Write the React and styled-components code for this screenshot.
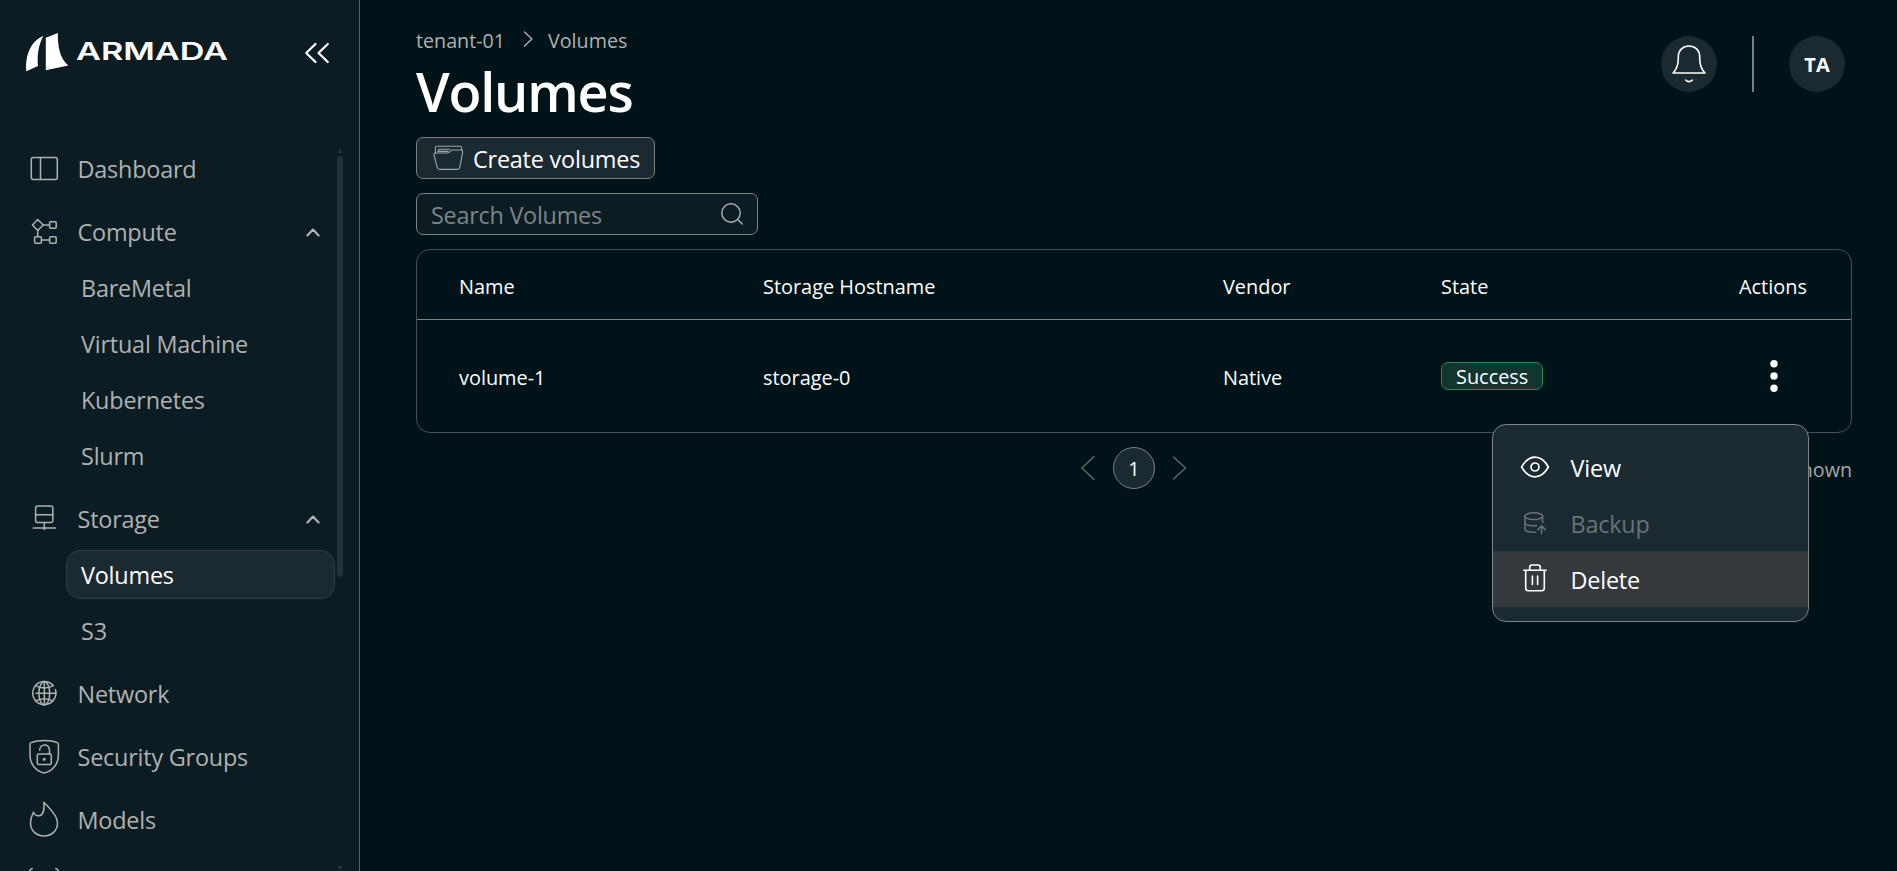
import React from 'react'
import styled, { createGlobalStyle } from 'styled-components'

const GlobalStyle = createGlobalStyle`
    * {
        box-sizing: border-box;
    }
    body {
        margin: 0;
        overflow: hidden;
        background-color: #001318;
        color: #ffffff;
        font-family: "Open Sans", "Noto Sans", sans-serif;
    }
    button, input {
        font-family: inherit;
        color: inherit;
    }
    svg {
        display: block;
        overflow: visible;
        flex-shrink: 0;
    }
`

const Page = styled.div`
    display: flex;
    height: 100vh;
    overflow: hidden;
`

/* ---------- sidebar ---------- */

const Sidebar = styled.aside`
    display: flex;
    flex-direction: column;
    flex-shrink: 0;
    width: 360px;
    background-color: #0b1c22;
    border-right: 1px solid #546063;
`
const SidebarTop = styled.div`
    display: flex;
    align-items: flex-start;
    justify-content: space-between;
    flex-shrink: 0;
    height: 144px;
    padding: 33px 30px 0 26px;
`
const CollapseButton = styled.button`
    display: flex;
    margin-top: 10px;
    padding: 0;
    border: none;
    background: none;
`
const SidebarBody = styled.div`
    display: flex;
    flex: 1;
    min-height: 0;
`
const Nav = styled.nav`
    display: flex;
    flex-direction: column;
    gap: 14px;
    width: 337px;
    overflow: hidden;
    color: #b0b1b1;
`
const NavGroup = styled.div`
    display: flex;
    flex-direction: column;
    flex-shrink: 0;
    gap: 7px;
`
const NavItem = styled.div`
    display: flex;
    align-items: center;
    gap: 18.5px;
    height: 49px;
    padding: 0 17px 0 29px;
    font-size: 23.4px;
    letter-spacing: -0.2px;
`
const NavLabel = styled.span`
    flex: 1;
    white-space: nowrap;
`
const SubItem = styled.div`
    display: flex;
    align-items: center;
    height: 49px;
    margin: 0 2px 0 66px;
    padding-left: 14px;
    font-size: 23.4px;
    letter-spacing: -0.2px;
    border: 1px solid ${props => props.$active ? '#313d42' : 'transparent'};
    border-radius: 14px;
    background-color: ${props => props.$active ? '#1b2a31' : 'transparent'};
    color: ${props => props.$active ? '#ffffff' : 'inherit'};
`
const ScrollTrack = styled.div`
    display: flex;
    flex-direction: column;
    align-items: center;
    justify-content: space-between;
    width: 6px;
    padding-top: 4px;
`
const ScrollThumb = styled.div`
    width: 6px;
    height: 421px;
    margin: 3px 0 auto;
    border-radius: 3px;
    background-color: #233239;
`
const ScrollArrow = styled.div`
    width: 0;
    height: 0;
    border: 3px solid transparent;
    border-top: ${props => props.$down ? '5px solid #233239' : 'none'};
    border-bottom: ${props => props.$down ? 'none' : '5px solid #233239'};
`

/* ---------- main ---------- */

const Main = styled.main`
    display: flex;
    flex-direction: column;
    flex: 1;
    padding: 24px 45px 0 56px;
`
const Header = styled.header`
    display: flex;
    justify-content: space-between;
    align-items: flex-start;
    height: 113px;
`
const Breadcrumb = styled.div`
    display: flex;
    align-items: center;
    height: 32px;
    font-size: 19.7px;
    color: #b0b1b1;
`
const CrumbArrow = styled.span`
    padding: 0 16px 0 18px;
`
const Title = styled.h1`
    margin: 0;
    font-size: 54px;
    line-height: 70px;
    font-weight: 600;
    letter-spacing: -1.2px;
`
const HeaderRight = styled.div`
    display: flex;
    align-items: center;
    gap: 35px;
    padding: 12px 7px 0 0;
`
const Circle = styled.div`
    display: flex;
    align-items: center;
    justify-content: center;
    width: 56px;
    height: 56px;
    border-radius: 50%;
    background-color: #1b2a31;
    font-size: 20px;
    font-weight: 700;
`
const Divider = styled.div`
    width: 2px;
    height: 56px;
    background-color: #808080;
`
const CreateButton = styled.button`
    display: flex;
    align-items: center;
    gap: 10px;
    width: 239px;
    height: 42px;
    padding: 0 0 0 16px;
    border: 1px solid #808080;
    border-radius: 7px;
    background-color: #1b2a31;
    font-size: 23.4px;
    letter-spacing: -0.2px;
    white-space: nowrap;
`
const ButtonLabel = styled.span`
    padding-top: 2px;
`
const SearchBox = styled.div`
    display: flex;
    align-items: center;
    width: 342px;
    height: 42px;
    margin: 14px 0;
    padding: 0 14px;
    border: 1px solid #808080;
    border-radius: 7px;
    background-color: #0b1c22;
`
const SearchInput = styled.input`
    flex: 1;
    min-width: 0;
    padding: 2px 0 0;
    border: none;
    outline: none;
    background: none;
    font-size: 23.4px;
    letter-spacing: -0.25px;
    &::placeholder {
        color: #7d8587;
        opacity: 1;
    }
`
const Table = styled.div`
    border: 1px solid #465255;
    border-radius: 14px;
`
const Row = styled.div`
    display: grid;
    grid-template-columns: 304px 460px 218px 298px 1fr;
    align-items: center;
    height: ${props => props.$head ? '70px' : '112px'};
    padding-left: 42px;
    font-size: 19.9px;
    border-bottom: ${props => props.$head ? '1px solid #7f8586' : 'none'};
`
const Cell = styled.div`
    display: flex;
    align-items: center;
    white-space: nowrap;
`
const TextCell = styled(Cell)`
    padding-top: 3px;
`
const Badge = styled.span`
    display: flex;
    align-items: center;
    height: 28px;
    padding: 0 14px;
    border: 1px solid #2c8a55;
    border-radius: 7px;
    background-color: #12352f;
`
const MenuAnchor = styled.div`
    position: relative;
    display: flex;
    justify-content: center;
    width: 70px;
`
const Menu = styled.div`
    position: absolute;
    top: 65px;
    right: 0;
    z-index: 2;
    width: 317px;
    padding: 14px 0;
    border: 1px solid #808586;
    border-radius: 14px;
    background-color: #1b2a31;
`
const MenuItem = styled.div`
    display: flex;
    align-items: center;
    gap: 20.5px;
    height: 56px;
    padding: 2px 0 0 27px;
    font-size: 23.4px;
    letter-spacing: -0.2px;
    color: ${props => props.$disabled ? '#697277' : '#ffffff'};
    background-color: ${props => props.$hovered ? '#33393d' : 'transparent'};
`
const Footer = styled.div`
    display: grid;
    grid-template-columns: 1fr auto 1fr;
    align-items: center;
    height: 42px;
    margin-top: 14px;
`
const Pager = styled.div`
    grid-column: 2;
    display: flex;
    align-items: center;
    gap: 18px;
    color: #5c6466;
`
const PageNumber = styled.span`
    display: flex;
    align-items: center;
    justify-content: center;
    width: 42px;
    height: 42px;
    border: 1px solid #808080;
    border-radius: 50%;
    background-color: #1b2a31;
    color: #ffffff;
    font-size: 20px;
`
const Shown = styled.span`
    justify-self: end;
    padding-top: 3px;
    font-size: 19.7px;
    color: #a3a7a8;
`

/* ---------- icons ---------- */

function Icon({ w, h, sw = 1.4, children }) {
    return (
        <svg width={w} height={h} viewBox={`0 0 ${w} ${h}`} fill="none" stroke="currentColor"
            strokeWidth={sw} strokeLinecap="round" strokeLinejoin="round">
            {children}
        </svg>
    )
}

const NavIcon = ({ children }) => <Icon w={30} h={36} sw={1.5}>{children}</Icon>

const Logo = () => (
    <svg width="204" height="40" viewBox="0 0 204 40" fill="#ffffff">
        <path d="M0.3 38.2 C-1 22 5 8 17.3 3 C12.5 12 11 22 12 33 Z" />
        <path d="M19.8 4.8 L31.8 0 C31.8 15 34 25 42.3 32.6 L19.8 37.2 Z" />
        <text x="50" y="27" fontFamily="Inter, sans-serif" fontWeight="600" fontSize="24.5"
            textLength="152" lengthAdjust="spacingAndGlyphs">ARMADA</text>
    </svg>
)

const DashboardIcon = () => (
    <NavIcon>
        <rect x="2.3" y="6.5" width="26" height="22" rx="2" />
        <path d="M11.5 6.5 V28.5" />
    </NavIcon>
)
const ComputeIcon = () => (
    <NavIcon>
        <path d="M8.7 5.5 L14.2 11 L8.7 16.5 L3.5 11 Z" />
        <rect x="20.6" y="7.7" width="6.6" height="6.6" rx="1" />
        <rect x="5.6" y="22.7" width="6.8" height="6.6" rx="1" />
        <rect x="20.6" y="22.7" width="6.6" height="6.6" rx="1" />
        <path d="M14.2 11 H20.6 M8.7 16.5 V22.7 M12.4 26 H20.6" />
    </NavIcon>
)
const StorageIcon = () => (
    <NavIcon>
        <rect x="6.6" y="5" width="17.2" height="16.6" rx="2" />
        <path d="M6.6 13.7 H23.8 M15.3 21.6 V28.5 M4.2 26.9 H26.4" />
    </NavIcon>
)
const NetworkIcon = () => (
    <NavIcon>
        <path d="M24.2 9.6 A11.6 11.6 0 1 0 26.4 13.6" />
        <path d="M15.3 5.7 V28.9 M7 17.3 H27" />
        <ellipse cx="15.3" cy="17.3" rx="5.4" ry="11.6" />
        <path d="M6.8 9.6 C11 12.7 19.5 12.7 24.2 9.6 M6.8 25.1 C11 21.9 19.5 21.9 23.8 25.1" />
    </NavIcon>
)
const SecurityIcon = () => (
    <NavIcon>
        <path d="M15.2 1.5 C10.5 1.5 5.5 2.2 2 3.6 Q1 4 1 5.2 V16.5 C1 25.5 7.5 32.2 15.2 34 C22.9 32.2 29.4 25.5 29.4 16.5 V5.2 Q29.4 4 28.4 3.6 C25 2.2 20 1.5 15.2 1.5 Z" />
        <rect x="8.3" y="15" width="14" height="10.6" rx="1.5" />
        <path d="M10.7 11.2 C10.7 4.2 20.5 4.2 20.5 11 V15" />
        <circle cx="15.2" cy="20.2" r="0.8" fill="currentColor" />
    </NavIcon>
)
const ModelsIcon = () => (
    <NavIcon>
        <path d="M14.9 0.2 C18.5 4.8 28.5 12 28.5 21 C28.5 28.7 22.5 34 15 34 C7.5 34 1.5 28.7 1.5 21 C1.5 16.5 2.8 13.5 4.5 10.2 C5.5 12.5 7.5 14.2 10.2 13.8 C14.5 13 15.5 7 14.9 0.2 Z" />
    </NavIcon>
)
const TrainingIcon = () => (
    <NavIcon>
        <path d="M0.5 6.2 C1 4.8 1.8 3.9 3.2 3.5 M26.8 3.5 C28.2 3.9 29 4.8 29.5 6.2" />
    </NavIcon>
)
const CaretUp = () => (
    <Icon w={14} h={8} sw={2.2}><path d="M1.4 7.4 L7 1.6 L12.6 7.4" /></Icon>
)
const CollapseIcon = () => (
    <Icon w={24} h={20} sw={2.2}><path d="M10.5 1 L1.2 10 L10.5 19 M22.8 1 L13.5 10 L22.8 19" /></Icon>
)
const FolderIcon = () => (
    <Icon w={30} h={26} sw={1.1}>
        <g stroke="#a0a6a8">
            <path d="M1 10 Q0.6 8 2.6 8 H14.6 Q16 8 16.8 6.8 L17.4 5.8 Q18 5 19.2 5 H28 Q30 5 29.6 7.6 L26.8 22.4 Q26.4 24.4 24.4 24.4 H6.6 Q4.6 24.4 4.2 22.4 Z" />
            <path d="M2.4 8 V2.6 Q2.4 1.2 3.8 1.2 H27.2 Q28.6 1.2 28.6 2.6 V5" />
            <path d="M5.2 6.4 V5.2 Q5.2 4.2 6.4 4.2 H16.6 M5.2 6.4 H15" />
        </g>
    </Icon>
)
const SearchIcon = () => (
    <Icon w={22} h={22}>
        <g stroke="#b0b1b1">
            <circle cx="10" cy="10" r="9.2" />
            <path d="M16.6 16.6 L21.2 21" />
        </g>
    </Icon>
)
const BellIcon = () => (
    <Icon w={34} h={38} sw={1.6}>
        <path d="M1 28 C5 24 6.3 20 6.3 13.5 V11.5 C6.3 5 11 1 17 1 C23 1 27.7 5 27.7 11.5 V13.5 C27.7 20 29 24 33 28 Z" />
        <path d="M13.6 35 Q17 38.2 20.4 35" />
    </Icon>
)
const EyeIcon = () => (
    <Icon w={30} h={24} sw={1.7}>
        <path d="M1.6 11 C5 5 9.5 1.2 15 1.2 C20.5 1.2 25 5 28.4 11 C25 17 20.5 20.8 15 20.8 C9.5 20.8 5 17 1.6 11 Z" />
        <circle cx="15" cy="11" r="4" />
    </Icon>
)
const BackupIcon = () => (
    <Icon w={30} h={24} sw={1.5}>
        <ellipse cx="13.8" cy="4.2" rx="8.8" ry="3.4" />
        <path d="M5 4.2 V17 C5 19.2 9 20.4 15.4 20.2 M22.6 4.2 V10.4 M5 10.6 C5 13.2 9.5 14.2 16.6 13.6" />
        <path d="M21.5 21.8 V14.2 M17.8 17.6 L21.5 13.9 L25.2 17.6" />
    </Icon>
)
const TrashIcon = () => (
    <Icon w={30} h={32} sw={1.6}>
        <path d="M3.8 6.2 H26.2 M5.7 6.2 V24 Q5.7 26.7 8.4 26.7 H21.6 Q24.3 26.7 24.3 24 V6.2" />
        <path d="M9.7 6.2 V3.4 Q9.7 1 12 1 H18 Q20.3 1 20.3 3.4 V6.2 M12.4 12 V20.5 M17.6 12 V20.5" />
    </Icon>
)
const DotsIcon = () => (
    <svg width="8" height="34" viewBox="0 0 8 34" fill="#ffffff">
        <circle cx="4" cy="4.7" r="3.7" />
        <circle cx="4" cy="17" r="3.7" />
        <circle cx="4" cy="29.3" r="3.7" />
    </svg>
)

const navGroups = [
    { label: 'Dashboard', icon: <DashboardIcon /> },
    { label: 'Compute', icon: <ComputeIcon />, items: ['BareMetal', 'Virtual Machine', 'Kubernetes', 'Slurm'] },
    { label: 'Storage', icon: <StorageIcon />, items: ['Volumes', 'S3'] },
    { label: 'Network', icon: <NetworkIcon /> },
    { label: 'Security Groups', icon: <SecurityIcon /> },
    { label: 'Models', icon: <ModelsIcon /> },
    { label: '', icon: <TrainingIcon /> },
]

export default function App() {

    return (
        <Page>
            <GlobalStyle />
            <Sidebar>
                <SidebarTop>
                    <Logo />
                    <CollapseButton><CollapseIcon /></CollapseButton>
                </SidebarTop>
                <SidebarBody>
                    <Nav>
                        {navGroups.map((group, i) => (
                            <NavGroup key={i}>
                                <NavItem>
                                    {group.icon}
                                    <NavLabel>{group.label}</NavLabel>
                                    {group.items && <CaretUp />}
                                </NavItem>
                                {group.items && group.items.map(item => (
                                    <SubItem key={item} $active={item === 'Volumes'}>{item}</SubItem>
                                ))}
                            </NavGroup>
                        ))}
                    </Nav>
                    <ScrollTrack>
                        <ScrollArrow />
                        <ScrollThumb />
                        <ScrollArrow $down />
                    </ScrollTrack>
                </SidebarBody>
            </Sidebar>
            <Main>
                <Header>
                    <div>
                        <Breadcrumb>
                            <span>tenant-01</span>
                            <CrumbArrow>
                                <Icon w={9} h={16}><path d="M1.5 0 L8.9 7 L1.5 14" /></Icon>
                            </CrumbArrow>
                            <span>Volumes</span>
                        </Breadcrumb>
                        <Title>Volumes</Title>
                    </div>
                    <HeaderRight>
                        <Circle><BellIcon /></Circle>
                        <Divider />
                        <Circle>TA</Circle>
                    </HeaderRight>
                </Header>
                <CreateButton>
                    <FolderIcon />
                    <ButtonLabel>Create volumes</ButtonLabel>
                </CreateButton>
                <SearchBox>
                    <SearchInput placeholder="Search Volumes" />
                    <SearchIcon />
                </SearchBox>
                <Table>
                    <Row $head>
                        <TextCell>Name</TextCell>
                        <TextCell>Storage Hostname</TextCell>
                        <TextCell>Vendor</TextCell>
                        <TextCell>State</TextCell>
                        <TextCell>Actions</TextCell>
                    </Row>
                    <Row>
                        <TextCell>volume-1</TextCell>
                        <TextCell>storage-0</TextCell>
                        <TextCell>Native</TextCell>
                        <Cell><Badge>Success</Badge></Cell>
                        <Cell>
                            <MenuAnchor>
                                <DotsIcon />
                                <Menu>
                                    <MenuItem><EyeIcon />View</MenuItem>
                                    <MenuItem $disabled><BackupIcon />Backup</MenuItem>
                                    <MenuItem $hovered><TrashIcon />Delete</MenuItem>
                                </Menu>
                            </MenuAnchor>
                        </Cell>
                    </Row>
                </Table>
                <Footer>
                    <Pager>
                        <Icon w={14} h={24} sw={1.6}><path d="M13 0.5 L1 12 L13 23.5" /></Icon>
                        <PageNumber>1</PageNumber>
                        <Icon w={14} h={24} sw={1.6}><path d="M0.5 1 L12.5 12 L0.5 23" /></Icon>
                    </Pager>
                    <Shown>1 of 1 shown</Shown>
                </Footer>
            </Main>
        </Page>
    )
}
